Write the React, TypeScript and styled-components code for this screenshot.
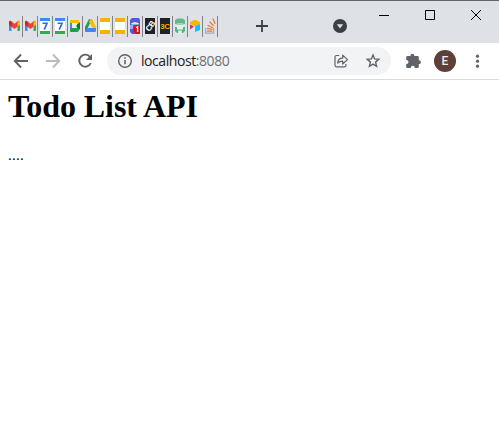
import React from 'react';
import styled, { createGlobalStyle } from 'styled-components';

const GlobalStyle = createGlobalStyle`
  * { box-sizing: border-box; }
  html, body { margin: 0; background: #fff; overflow: hidden; }
`;

const Window = styled.div`
  display: flex;
  flex-direction: column;
  width: 499px;
  height: 444px;
  background: #fff;
`;

const TabStrip = styled.header`
  display: flex;
  height: 43px;
  background: #dee1e6;
  border-top: 1px solid #646569;
`;

const Tabs = styled.div`
  display: flex;
  padding: 15px 0 0 8px;
`;

const Tab = styled.div`
  display: flex;
  width: 15px;
  height: 21px;
  padding: 2px 0 0 2px;
  border-right: 1px solid #808387;

  &:first-child { padding-left: 1px; }
`;

const Favicon = styled.svg`
  display: block;
  flex: none;
  width: 11px;
  height: 16px;
`;

const StripButton = styled.button<{ $left: number; $top: number }>`
  display: flex;
  width: 16px;
  height: 16px;
  margin: ${(p) => p.$top}px 0 0 ${(p) => p.$left}px;
  padding: 0;
  border: 0;
  background: transparent;
`;

const Caption = styled.div`
  display: flex;
  margin-left: 13px;
`;

const CaptionButton = styled.button`
  display: flex;
  justify-content: center;
  width: 46px;
  height: 28px;
  padding: 9px 0 0;
  border: 0;
  background: transparent;
`;

const Toolbar = styled.nav`
  display: flex;
  align-items: center;
  height: 37px;
  padding: 0 11px 1px 11px;
  border-bottom: 1px solid #dadce0;
  background: #fff;
`;

const ToolButton = styled.button<{ $gap?: number }>`
  display: flex;
  flex: none;
  width: 20px;
  height: 20px;
  padding: 0;
  margin-right: ${(p) => p.$gap ?? 0}px;
  border: 0;
  background: transparent;
`;

const ExtensionsButton = styled(ToolButton)`
  margin-left: 12px;
`;

const AddressBar = styled.div`
  display: flex;
  align-items: center;
  width: 284px;
  height: 28px;
  padding: 0 8px;
  border-radius: 14px;
  background: #f1f3f4;
`;

const Address = styled.span`
  flex: 1;
  margin-left: 6px;
  font: 14px/20px "Open Sans", "Noto Sans", sans-serif;
  letter-spacing: -0.43px;
  color: #202124;
`;

const Port = styled.span`
  color: #6b6f74;
`;

const Avatar = styled.div`
  display: flex;
  flex: none;
  align-items: center;
  justify-content: center;
  width: 22px;
  height: 22px;
  margin: 0 11px 0 11px;
  border-radius: 50%;
  background: #5d4037;
  color: #eee;
  font: 500 12px/22px Roboto, sans-serif;
`;

const Page = styled.main`
  padding: 8px;
  color: #000;
  font: 16px/18px "Liberation Serif", serif;
`;

const Title = styled.h1`
  margin: 0 0 21px;
  font-size: 32px;
  line-height: 37px;
  letter-spacing: -0.08px;
`;

const Body = styled.p`
  margin: 0;
  font-size: 15px;
  letter-spacing: 0.25px;
`;

const Gmail = () => (
  <Favicon viewBox="0 0 11 16">
    <path d="M0 6h2.5v7H1q-1 0-1-1z" fill="#4285f4" />
    <path d="M8.5 6H11v6q0 1-1 1H8.5z" fill="#34a853" />
    <path d="M0 4q1-2.2 2.5-.8l3 2.5 3-2.5Q10 1.8 11 4v2.8L5.5 11 0 6.8z" fill="#ea4335" />
    <path d="M0 4q.4-1 1.2-1.2L2.5 4v4.8L0 6.8z" fill="#c5221f" />
    <path d="M11 4q-.4-1-1.2-1.2L8.5 4v4.8l2.5-2z" fill="#fbbc04" />
  </Favicon>
);

const Calendar = () => (
  <Favicon viewBox="0 0 11 16">
    <path d="M0 0h10v16H0z" fill="#fff" />
    <path d="M0 0h10v3H0z" fill="#4285f4" />
    <path d="M0 13h10v3H0z" fill="#34a853" />
    <path d="M2.5 5.2h4.6L4.2 11.7" fill="none" stroke="#2970d8" strokeWidth="1.6" />
  </Favicon>
);

const Chat = () => (
  <Favicon viewBox="0 0 11 16">
    <path d="M0 6h9v6q0 2-2 2H1q-1 0-1-1z" fill="#18a34a" />
    <path d="M0 6V3q0-1 1-1h7q1 0 1 1v3z" fill="#fbbc04" />
    <path d="M0 5h2v5H0z" fill="#4285f4" />
    <path d="M2 5h5v5H2z" fill="#e5eef2" />
    <path d="m6 8 4-4v8z" fill="#087b38" />
  </Favicon>
);

const Drive = () => (
  <Favicon viewBox="0 0 11 16">
    <path d="M4 1h3L2 12l-2 2V9z" fill="#18a05a" />
    <path d="M5 1h2l4 8v2H8L4 4z" fill="#fbbc04" />
    <path d="M2 10h9v3q0 1-1 1H0z" fill="#4285f4" />
    <path d="M5 6 3 10h4z" fill="#dee1e6" />
  </Favicon>
);

const Slides = () => (
  <Favicon viewBox="0 0 11 16">
    <path d="M0 0h10v16H0z" fill="#f4b400" />
    <path d="M0 4h10v8H0z" fill="#fff" />
  </Favicon>
);

const ChatFace = () => (
  <Favicon viewBox="0 0 11 16">
    <path d="M2 0h7l1 2v14H2l-2-2V2z" fill="#535bd8" />
    <path d="M1 5.5q4-3 8 0l-.5 1h-7z" fill="#e2e5f8" />
    <path d="M0 7h3v4H0z" fill="#9fa7ef" />
    <path d="M10 7H6.5Q3 8 3 11.5T6.5 16H10z" fill="#dc101c" />
    <path d="m6.2 9.7 1.4-1V14" fill="none" stroke="#fff" strokeWidth="1.3" />
  </Favicon>
);

const FaviconText = styled.text`
  font: bold 8px "Liberation Sans", sans-serif;
  letter-spacing: -0.5px;
`;

const Badge = ({ label, tilted = false }: { label: string; tilted?: boolean }) => (
  <Favicon viewBox="0 0 11 16">
    <path d="M0 0h10v16H0z" fill="#202124" />
    <FaviconText
      x={tilted ? 5 : 4.9}
      y={tilted ? 11 : 10.8}
      textAnchor="middle"
      fill={tilted ? '#fff' : '#f5a719'}
      transform={tilted ? 'rotate(-55 5 8)' : undefined}
    >{label}</FaviconText>
  </Favicon>
);

const GreenHead = () => (
  <Favicon viewBox="0 0 11 16">
    <path d="M2.5.4h5L10 2v4H8.8L7.5 5.2H3L1.2 6H0V2z" fill="#62b887" />
    <path d="M1 6h8v8L7 16H3l-2-2z" fill="#e7eeee" />
    <path d="M1.5 6.3h7" stroke="#72bd91" strokeWidth=".8" />
    <path d="M0 9h2v2l1.3 1v3H2l-2-2zM10 9H8v2l-1.3 1v3H8l2-2z" fill="#58b681" />
    <path d="M3.2 12h3.6" stroke="#58b681" />
  </Favicon>
);

const Airtable = () => (
  <Favicon viewBox="0 0 11 16">
    <path d="m0 4 4-2h2l4 2v2L5 8 0 6z" fill="#fcb400" />
    <path d="m5 8 5-2v6l-5 2z" fill="#18bfff" />
    <path d="m0 6.5 4 2-4 3z" fill="#d72d67" />
  </Favicon>
);

const StackOverflow = () => (
  <Favicon viewBox="0 0 11 16">
    <path d="M.6 10v5.2h8V10" fill="none" stroke="#a9abad" strokeWidth="1.2" />
    <path d="M2 13h5.4M2 10.3l5.5 1M2.6 7.2l5.2 2.5M4.5 3.8l4.1 4M7.8.6l2.4 5.2" fill="none" stroke="#ed7a2d" strokeWidth="1.25" />
  </Favicon>
);

export default function App() {
  return (
    <>
      <GlobalStyle />
      <Window>
        <TabStrip>
          <Tabs>
            <Tab><Gmail /></Tab>
            <Tab><Gmail /></Tab>
            <Tab><Calendar /></Tab>
            <Tab><Calendar /></Tab>
            <Tab><Chat /></Tab>
            <Tab><Drive /></Tab>
            <Tab><Slides /></Tab>
            <Tab><Slides /></Tab>
            <Tab><ChatFace /></Tab>
            <Tab><Badge label="CB" tilted /></Tab>
            <Tab><Badge label="3C" /></Tab>
            <Tab><GreenHead /></Tab>
            <Tab><Airtable /></Tab>
            <Tab><StackOverflow /></Tab>
          </Tabs>
          <StripButton $left={36} $top={17} aria-label="New tab">
            <svg width="16" height="16" viewBox="0 0 16 16"><path d="M2 8h12M8 2v12" stroke="#3c4043" strokeWidth="1.8" /></svg>
          </StripButton>
          <StripButton $left={62} $top={17} aria-label="Search tabs">
            <svg width="16" height="16" viewBox="0 0 16 16"><circle cx="8" cy="8" r="7" fill="#3c4043" /><path d="M4.8 6.2h6.4L8 10.6z" fill="#dee1e6" /></svg>
          </StripButton>
          <Caption>
            <CaptionButton aria-label="Minimize"><svg width="10" height="10"><path d="M0 5.5h10" stroke="#000" /></svg></CaptionButton>
            <CaptionButton aria-label="Maximize"><svg width="10" height="10"><path d="M.5.5h9v9h-9z" fill="none" stroke="#000" /></svg></CaptionButton>
            <CaptionButton aria-label="Close"><svg width="10" height="10"><path d="m0 0 10 10M10 0 0 10" stroke="#000" /></svg></CaptionButton>
          </Caption>
        </TabStrip>
        <Toolbar>
          <ToolButton $gap={12} aria-label="Back">
            <svg width="20" height="20" viewBox="0 0 20 20"><path d="M17 10H4M10 3.5 3.8 10l6.2 6.5" fill="none" stroke="#5f6368" strokeWidth="1.9" /></svg>
          </ToolButton>
          <ToolButton $gap={12} aria-label="Forward">
            <svg width="20" height="20" viewBox="0 0 20 20"><path d="M3 10h13M10 3.5l6.2 6.5-6.2 6.5" fill="none" stroke="#b9bbbe" strokeWidth="1.9" /></svg>
          </ToolButton>
          <ToolButton $gap={12} aria-label="Reload">
            <svg width="20" height="20" viewBox="0 0 20 20"><path d="M15.1 6.1A6 6 0 1 0 15.8 12" fill="none" stroke="#5f6368" strokeWidth="1.9" /><path d="M17 3v6h-6z" fill="#5f6368" /></svg>
          </ToolButton>
          <AddressBar>
            <ToolButton aria-label="Site information">
              <svg width="20" height="20" viewBox="0 0 20 20"><circle cx="10" cy="10" r="6.3" fill="none" stroke="#5f6368" strokeWidth="1.4" /><path d="M10 9v4.3M10 6.3v1.5" stroke="#5f6368" strokeWidth="1.6" /></svg>
            </ToolButton>
            <Address>localhost<Port>:8080</Port></Address>
            <ToolButton $gap={12} aria-label="Share">
              <svg width="20" height="20" viewBox="0 0 20 20"><path d="M8.2 4.5H5.5Q4 4.5 4 6v8.3q0 1.5 1.5 1.5h8q1.5 0 1.5-1.5V13" fill="none" stroke="#5f6368" strokeWidth="1.2" /><path d="M6.7 12q.4-4.8 5-4.8V4.1l4.8 4.5-4.8 4.4v-2.8q-3 0-5 1.8z" fill="none" stroke="#5f6368" strokeWidth="1.2" strokeLinejoin="round" /></svg>
            </ToolButton>
            <ToolButton aria-label="Bookmark">
              <svg width="20" height="20" viewBox="0 0 20 20"><path d="m10 4.1 1.6 3.8 4.2.4-3.2 2.8 1 4.2-3.6-2.2-3.6 2.2 1-4.2-3.2-2.8 4.2-.4z" fill="none" stroke="#5f6368" strokeWidth="1.4" /></svg>
            </ToolButton>
          </AddressBar>
          <ExtensionsButton aria-label="Extensions">
            <svg width="20" height="20" viewBox="0 0 20 20"><path d="M4.5 5h3v-.4a1.9 1.9 0 0 1 3.8 0V5h3.2q1.3 0 1.3 1.3v3h.2a1.9 1.9 0 0 1 0 3.8h-.2v2.6q0 1.3-1.3 1.3h-2.7v-.3a2 2 0 0 0-4 0v.3H4.5q-1.3 0-1.3-1.3v-2.6h.3a2 2 0 0 0 0-4h-.3V6.3Q3.2 5 4.5 5z" fill="#5f6368" /></svg>
          </ExtensionsButton>
          <Avatar>E</Avatar>
          <ToolButton aria-label="Menu">
            <svg width="20" height="20" viewBox="0 0 20 20"><g fill="#5f6368"><circle cx="10.5" cy="5.2" r="1.6" /><circle cx="10.5" cy="10.2" r="1.6" /><circle cx="10.5" cy="15.2" r="1.6" /></g></svg>
          </ToolButton>
        </Toolbar>
        <Page>
          <Title>Todo List API</Title>
          <Body>....</Body>
        </Page>
      </Window>
    </>
  );
}
